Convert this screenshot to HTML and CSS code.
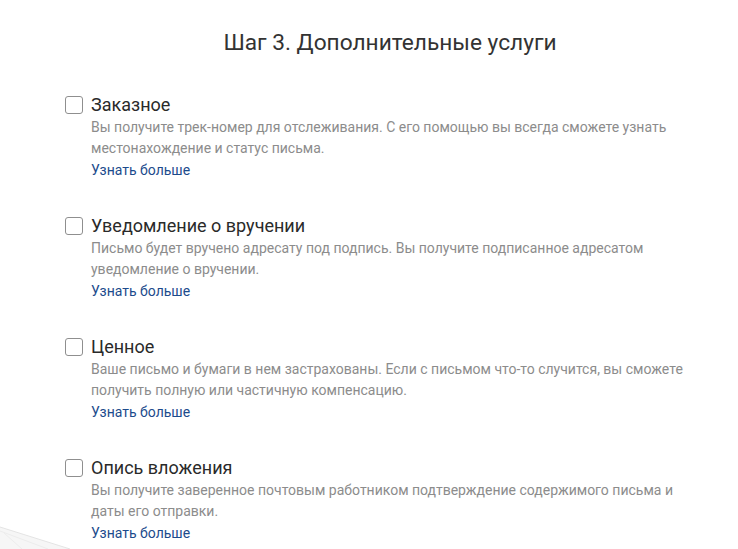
FILE: index.html
```html
<!DOCTYPE html>
<html lang="ru">
<head>
  <meta charset="UTF-8" />
  <meta name="viewport" content="width=device-width, initial-scale=1.0"/>
  <title>Шаг 3. Дополнительные услуги</title>
  <link rel="stylesheet" href="styles.css">
</head>
<body>
  <div class="page">
    <h1 class="step-title">Шаг 3. Дополнительные услуги</h1>

    <div class="services">
      <!-- Заказное -->
      <div class="service">
        <label class="service-head">
          <input type="checkbox" class="service-check" />
          <span class="service-name">Заказное</span>
        </label>
        <p class="service-desc">Вы получите трек-номер для отслеживания. С его помощью вы всегда сможете узнать местонахождение и статус письма.</p>
        <a href="#" class="service-link">Узнать больше</a>
      </div>

      <!-- Уведомление -->
      <div class="service">
        <label class="service-head">
          <input type="checkbox" class="service-check" />
          <span class="service-name">Уведомление о вручении</span>
        </label>
        <p class="service-desc">Письмо будет вручено адресату под подпись. Вы получите подписанное адресатом уведомление о вручении.</p>
        <a href="#" class="service-link">Узнать больше</a>
      </div>

      <!-- Ценное -->
      <div class="service">
        <label class="service-head">
          <input type="checkbox" class="service-check" />
          <span class="service-name">Ценное</span>
        </label>
        <p class="service-desc">Ваше письмо и бумаги в нем застрахованы. Если с письмом что-то случится, вы сможете получить полную или частичную компенсацию.</p>
        <a href="#" class="service-link">Узнать больше</a>
      </div>

      <!-- Опись -->
      <div class="service">
        <label class="service-head">
          <input type="checkbox" class="service-check" />
          <span class="service-name">Опись вложения</span>
        </label>
        <p class="service-desc">Вы получите заверенное почтовым работником подтверждение содержимого письма и даты его отправки.</p>
        <a href="#" class="service-link">Узнать больше</a>
      </div>
    </div>
  </div>

  <!-- фон: бумажный самолётик -->
  <svg class="plane" width="120" height="40" viewBox="0 0 120 40">
    <polygon points="0,18 70,40 0,40" fill="#f6f6f6" />
    <line x1="0" y1="18" x2="70" y2="40" stroke="#e4e4e4" stroke-width="1" />
    <line x1="0" y1="22" x2="48" y2="40" stroke="#ececec" stroke-width="1" />
    <line x1="4" y1="24" x2="22" y2="40" stroke="#ececec" stroke-width="1" />
  </svg>
</body>
</html>
```

FILE: styles.css
```css
body {
  margin: 0;
  background-color: #fff;
  font-family: Roboto, "Liberation Sans", Arial, sans-serif;
  color: #222;
  overflow: hidden;
}
.page {
  padding: 30px 0 0 65px;
  width: 650px;
}
.step-title {
  margin: 0 0 37px;
  font-size: 22.7px;
  line-height: 26px;
  font-weight: 400;
  color: #333;
  text-align: center;
}

.services {
  display: flex;
  flex-direction: column;
  gap: 33px;
}
.service {
  display: flex;
  flex-direction: column;
  padding-left: 26px;
}
.service-head {
  display: flex;
  align-items: center;
  margin-left: -26px;
  cursor: pointer;
}
.service-check {
  appearance: none;
  -webkit-appearance: none;
  margin: 0 8px 0 0;
  width: 18px;
  height: 18px;
  border: 1px solid #8f8f8f;
  border-radius: 3px;
  background: #fff;
  box-sizing: border-box;
}
.service-name {
  font-size: 18px;
  line-height: 24px;
  color: #2a2a2a;
}
.service-desc {
  margin: 0;
  font-size: 14px;
  line-height: 21px;
  color: #8c8c8c;
  max-width: 600px;
}
.service-link {
  margin-top: 1px;
  font-size: 14px;
  line-height: 21px;
  color: #1c4b8c;
  text-decoration: none;
  align-self: flex-start;
}

.plane {
  position: absolute;
  left: 0;
  bottom: 0;
}
```
